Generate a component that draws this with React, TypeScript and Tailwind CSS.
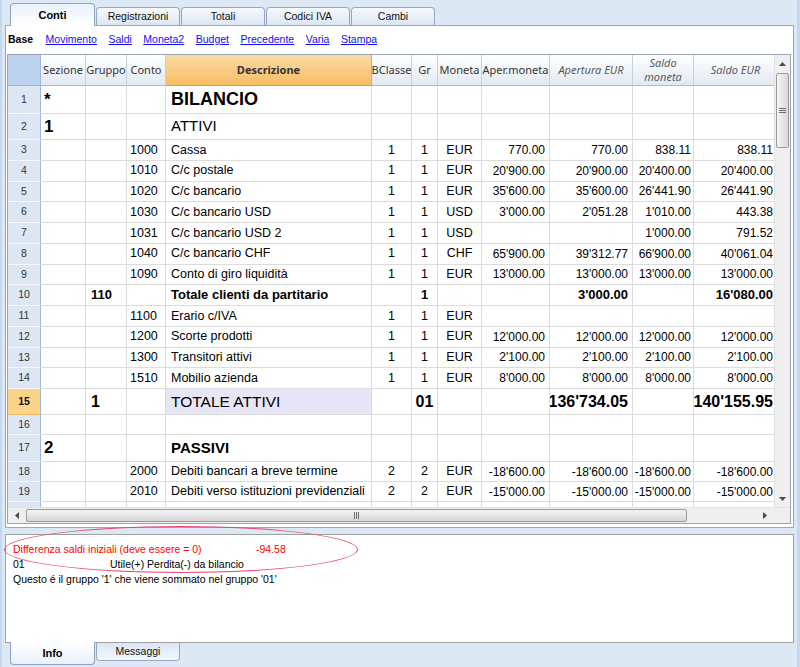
import React from "react";

type Kind = "title" | "group" | "group2" | "sub" | "total";

interface Row {
  n: number;
  h: string;
  c: string[];
  kind?: Kind;
  neg?: boolean;
  hideNum?: boolean;
}

const R = "h-[20.75px]";
const empty = ["", "", "", "", "", "", "", "", "", "", ""];

const rows: Row[] = [
  { n: 1, h: "h-[28px]", kind: "title", c: ["*", "", "", "BILANCIO", "", "", "", "", "", "", ""] },
  { n: 2, h: "h-[26px]", kind: "group", c: ["1", "", "", "ATTIVI", "", "", "", "", "", "", ""] },
  { n: 3, h: R, c: ["", "", "1000", "Cassa", "1", "1", "EUR", "770.00", "770.00", "838.11", "838.11"] },
  { n: 4, h: R, c: ["", "", "1010", "C/c postale", "1", "1", "EUR", "20'900.00", "20'900.00", "20'400.00", "20'400.00"] },
  { n: 5, h: R, c: ["", "", "1020", "C/c bancario", "1", "1", "EUR", "35'600.00", "35'600.00", "26'441.90", "26'441.90"] },
  { n: 6, h: R, c: ["", "", "1030", "C/c bancario USD", "1", "1", "USD", "3'000.00", "2'051.28", "1'010.00", "443.38"] },
  { n: 7, h: R, c: ["", "", "1031", "C/c bancario USD 2", "1", "1", "USD", "", "", "1'000.00", "791.52"] },
  { n: 8, h: R, c: ["", "", "1040", "C/c bancario CHF", "1", "1", "CHF", "65'900.00", "39'312.77", "66'900.00", "40'061.04"] },
  { n: 9, h: R, c: ["", "", "1090", "Conto di giro liquidità", "1", "1", "EUR", "13'000.00", "13'000.00", "13'000.00", "13'000.00"] },
  { n: 10, h: R, kind: "sub", c: ["", "110", "", "Totale clienti da partitario", "", "1", "", "", "3'000.00", "", "16'080.00"] },
  { n: 11, h: R, c: ["", "", "1100", "Erario c/IVA", "1", "1", "EUR", "", "", "", ""] },
  { n: 12, h: R, c: ["", "", "1200", "Scorte prodotti", "1", "1", "EUR", "12'000.00", "12'000.00", "12'000.00", "12'000.00"] },
  { n: 13, h: R, c: ["", "", "1300", "Transitori attivi", "1", "1", "EUR", "2'100.00", "2'100.00", "2'100.00", "2'100.00"] },
  { n: 14, h: R, c: ["", "", "1510", "Mobilio azienda", "1", "1", "EUR", "8'000.00", "8'000.00", "8'000.00", "8'000.00"] },
  { n: 15, h: "h-[26px]", kind: "total", c: ["", "1", "", "TOTALE ATTIVI", "", "01", "", "", "136'734.05", "", "140'155.95"] },
  { n: 16, h: "h-[20px]", c: empty },
  { n: 17, h: "h-[27px]", kind: "group2", c: ["2", "", "", "PASSIVI", "", "", "", "", "", "", ""] },
  { n: 18, h: "h-[20px]", neg: true, c: ["", "", "2000", "Debiti bancari a breve termine", "2", "2", "EUR", "-18'600.00", "-18'600.00", "-18'600.00", "-18'600.00"] },
  { n: 19, h: "h-[20px]", neg: true, c: ["", "", "2010", "Debiti verso istituzioni previdenziali", "2", "2", "EUR", "-15'000.00", "-15'000.00", "-15'000.00", "-15'000.00"] },
  { n: 20, h: "h-[20px]", hideNum: true, c: empty },
];

const widths = [
  "w-[45px]", "w-[41px]", "w-[39px]", "w-[206px]", "w-[40px]", "w-[26px]",
  "w-[44px]", "w-[68px]", "w-[83px]", "w-[61px]", "w-[84px]",
];

const aligns = [
  "justify-start pl-[3px]", "justify-start pl-[5px]", "justify-start pl-[3px]", "justify-start pl-[5px]",
  "justify-center", "justify-center", "justify-center",
  "justify-end pr-[4px]", "justify-end pr-[4px]", "justify-end pr-[2px]", "justify-end pr-[4px]",
];

const headers = [
  { t: "Sezione" }, { t: "Gruppo" }, { t: "Conto" }, { t: "Descrizione", main: true },
  { t: "BClasse" }, { t: "Gr" }, { t: "Moneta" }, { t: "Aper.moneta" },
  { t: "Apertura EUR", it: true }, { t: "Saldo moneta", it: true, two: true }, { t: "Saldo EUR", it: true },
];

const tabs = ["Conti", "Registrazioni", "Totali", "Codici IVA", "Cambi"];
const links = ["Movimento", "Saldi", "Moneta2", "Budget", "Precedente", "Varia", "Stampa"];

function cellClass(row: Row, i: number) {
  switch (row.kind) {
    case "title":
      if (i === 0) return "font-bold text-[17px]";
      if (i === 3) return "font-bold text-[18px]";
      return "";
    case "group":
      if (i === 0) return "font-bold text-[17px]";
      if (i === 3) return "text-[15px]";
      return "";
    case "group2":
      if (i === 0) return "font-bold text-[17px]";
      if (i === 3) return "font-bold text-[15px]";
      return "";
    case "sub":
      return "font-bold text-[13px]";
    case "total":
      if (i === 3) return "text-[15.5px] bg-[#e6e6f6]";
      return "font-bold text-[16px]";
    default:
      if (i >= 7) return row.neg ? "text-[12px] text-[#ff0000]" : "text-[12px]";
      return "";
  }
}

function UpArrow() {
  return (
    <svg width="7" height="4" viewBox="0 0 7 4">
      <polygon points="0,4 3.5,0 7,4" fill="#4a4a4a" />
    </svg>
  );
}

function DownArrow() {
  return (
    <svg width="7" height="4" viewBox="0 0 7 4">
      <polygon points="0,0 3.5,4 7,0" fill="#4a4a4a" />
    </svg>
  );
}

function LeftArrow() {
  return (
    <svg width="4" height="7" viewBox="0 0 4 7">
      <polygon points="4,0 0,3.5 4,7" fill="#4a4a4a" />
    </svg>
  );
}

function RightArrow() {
  return (
    <svg width="4" height="7" viewBox="0 0 4 7">
      <polygon points="0,0 4,3.5 0,7" fill="#4a4a4a" />
    </svg>
  );
}

function GridTable() {
  return (
    <div className="ml-[1px] w-[784px] border border-[#9aa6b6] bg-white">
      <div className="flex">
        <div className="w-[766px] overflow-hidden">
          {/* header */}
          <div className="flex h-[31px] w-[770px]">
            <div className="w-[33px] shrink-0 border-b border-r border-[#9fb6d6] bg-[#bdd2ee]" />
            {headers.map((h, i) => (
              <div
                key={h.t}
                className={`${widths[i]} shrink-0 flex items-center justify-center overflow-hidden whitespace-nowrap border-r border-b font-['Noto_Sans',sans-serif] text-[11px] leading-[14px] ${
                  h.main
                    ? "bg-linear-to-b from-[#fcdba3] to-[#f6bd62] border-[#e9a848] border-b-[#e39a30] font-bold text-[#222]"
                    : "bg-linear-to-b from-white to-[#e2e9f3] border-[#c3d0e2] border-b-[#a9bbd4]"
                } ${h.it ? "italic text-[#5a5a5a]" : "text-[#333]"}`}
              >
                {h.two ? (
                  <div className="flex flex-col items-center leading-[14px]">
                    <span>Saldo</span>
                    <span>moneta</span>
                  </div>
                ) : (
                  h.t
                )}
              </div>
            ))}
          </div>
          {/* body */}
          <div className="h-[421px] overflow-hidden">
            {rows.map((row) => (
              <div key={row.n} className={`flex w-[770px] ${row.h}`}>
                <div
                  className={`w-[33px] shrink-0 flex items-center justify-center border-r border-b border-r-[#9fb6d6] text-[10.5px] ${
                    row.kind === "total"
                      ? "bg-[#fbd38b] border-b-[#f0b860] font-bold text-[#111]"
                      : "bg-[#dde7f4] border-b-[#f4f7fb] text-[#333]"
                  }`}
                >
                  {row.hideNum ? "" : row.n}
                </div>
                {row.c.map((v, i) => (
                  <div
                    key={i}
                    className={`${widths[i]} ${aligns[i]} shrink-0 flex items-center overflow-hidden whitespace-nowrap border-r border-b border-[#dcdcdc] text-[12.5px] text-black ${cellClass(row, i)}`}
                  >
                    {v}
                  </div>
                ))}
              </div>
            ))}
          </div>
        </div>
        {/* vertical scrollbar */}
        <div className="w-[16px] h-[452px] flex flex-col bg-[#efefef] border-l border-[#e2e2e2]">
          <div className="h-[17px] flex items-center justify-center">
            <UpArrow />
          </div>
          <div className="mx-[1px] mt-px h-[75px] rounded-[2px] border border-[#9a9a9a] bg-linear-to-r from-[#f4f4f4] to-[#d9d9d9] flex flex-col items-center justify-center gap-[1px]">
            <div className="w-[7px] h-px bg-[#6e6e6e]" />
            <div className="w-[7px] h-px bg-[#6e6e6e]" />
            <div className="w-[7px] h-px bg-[#6e6e6e]" />
          </div>
          <div className="flex-1" />
          <div className="h-[17px] flex items-center justify-center">
            <DownArrow />
          </div>
        </div>
      </div>
      {/* horizontal scrollbar */}
      <div className="flex h-[16px] border-t border-[#e2e2e2]">
        <div className="w-[766px] flex bg-[#efefef]">
          <div className="w-[18px] flex items-center justify-center">
            <LeftArrow />
          </div>
          <div className="w-[661px] my-[1px] rounded-[2px] border border-[#9a9a9a] bg-linear-to-b from-[#f4f4f4] to-[#d6d6d6] flex items-center justify-center gap-[1px]">
            <div className="w-px h-[7px] bg-[#6e6e6e]" />
            <div className="w-px h-[7px] bg-[#6e6e6e]" />
            <div className="w-px h-[7px] bg-[#6e6e6e]" />
          </div>
          <div className="flex-1" />
          <div className="w-[18px] flex items-center justify-center">
            <RightArrow />
          </div>
        </div>
        <div className="w-[16px] bg-[#efefef]" />
      </div>
    </div>
  );
}

export default function App() {
  return (
    <div className="relative w-[800px] h-[667px] overflow-hidden bg-[#dde8f5] border-l-[2px] border-r-[3px] border-[#c6d8ef] font-['Liberation_Sans',Arial,sans-serif]">
      {/* top tabs */}
      <div className="flex items-end h-[25px] pl-[8px]">
        {tabs.map((t, i) =>
          i === 0 ? (
            <div
              key={t}
              className="relative z-10 -mb-px w-[85px] h-[23px] flex items-center justify-center rounded-t-[4px] border border-b-0 border-[#8ea3c1] bg-linear-to-b from-[#e9f1fb] to-white text-[11px] font-bold text-black"
            >
              {t}
            </div>
          ) : (
            <div
              key={t}
              className="ml-px w-[84px] h-[18px] flex items-center justify-center rounded-t-[4px] border border-b-0 border-[#93a8c6] bg-linear-to-b from-[#f6f9fd] to-[#dbe6f4] text-[10.5px] text-[#111]"
            >
              {t}
            </div>
          )
        )}
      </div>

      {/* main panel */}
      <div className="ml-[3px] w-[789px] h-[503px] border border-[#9aa8ba] bg-white">
        <div className="flex items-center h-[28px] pl-[2px] gap-[11.5px] text-[10.5px]">
          <span className="font-bold text-black mr-[1px]">Base</span>
          {links.map((l) => (
            <span key={l} className="text-[#1010ee] underline">
              {l}
            </span>
          ))}
        </div>
        <GridTable />
      </div>

      {/* info panel */}
      <div className="ml-[3px] mt-[6px] w-[789px] h-[109px] border border-[#a0a0a0] bg-white pl-[7px] pt-[7px] text-[10.5px] leading-[15px] text-black">
        <div className="flex text-[#ff0000]">
          <span className="w-[243px]">Differenza saldi iniziali (deve essere = 0)</span>
          <span>-94.58</span>
        </div>
        <div className="flex">
          <span className="w-[97px]">01</span>
          <span>Utile(+) Perdita(-) da bilancio</span>
        </div>
        <div>Questo é il gruppo '1' che viene sommato nel gruppo '01'</div>
      </div>

      {/* bottom tabs */}
      <div className="flex items-start pl-[8px] -mt-px">
        <div className="relative z-10 w-[85px] h-[23px] flex items-center justify-center rounded-b-[4px] border border-t-0 border-[#8ea3c1] bg-linear-to-t from-[#e9f1fb] to-white text-[11px] font-bold text-black">
          Info
        </div>
        <div className="ml-px mt-px w-[84px] h-[18px] flex items-center justify-center rounded-b-[4px] border border-t-0 border-[#93a8c6] bg-linear-to-b from-[#dbe6f4] to-[#f3f7fc] text-[10.5px] text-[#111]">
          Messaggi
        </div>
      </div>

      {/* annotation ellipse */}
      <div className="absolute left-[2px] top-[526px] w-[354px] h-[47px] rounded-[50%] border-[1.5px] border-[#e5466c]" />
    </div>
  );
}
